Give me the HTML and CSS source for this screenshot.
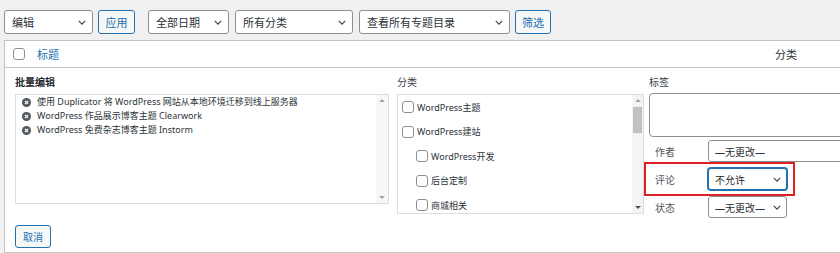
FILE: index.html
```html
<!DOCTYPE html>
<html lang="zh-CN">
<head>
    <meta charset="UTF-8">
    <meta name="viewport" content="width=device-width, initial-scale=1.0">
    <title>批量编辑</title>
    <link rel="stylesheet" href="styles.css">
</head>
<body>
    <div class="tablenav">
        <div class="select w-action">编辑
            <svg class="chev" viewBox="0 0 10 6"><path d="M1 1l4 4 4-4"/></svg>
        </div>
        <button class="btn btn-apply">应用</button>
        <div class="select w-date">全部日期
            <svg class="chev" viewBox="0 0 10 6"><path d="M1 1l4 4 4-4"/></svg>
        </div>
        <div class="select w-cat">所有分类
            <svg class="chev" viewBox="0 0 10 6"><path d="M1 1l4 4 4-4"/></svg>
        </div>
        <div class="select w-topic">查看所有专题目录
            <svg class="chev" viewBox="0 0 10 6"><path d="M1 1l4 4 4-4"/></svg>
        </div>
        <button class="btn btn-filter">筛选</button>
    </div>

    <div class="list-table">
        <div class="thead">
            <span class="cb"></span>
            <a class="col-title" href="#">标题</a>
            <span class="col-cat">分类</span>
        </div>

        <div class="bulk-edit">
            <div class="bulk-cols">
                <!-- 已选文章 -->
                <div class="col col-posts">
                    <div class="label label-strong">批量编辑</div>
                    <div class="box posts-box">
                        <ul class="post-list">
                            <li><span class="remove"><svg viewBox="0 0 10 10"><circle cx="5" cy="5" r="5"/><path d="M3.2 3.2l3.6 3.6M6.8 3.2l-3.6 3.6"/></svg></span>使用 Duplicator 将 WordPress 网站从本地环境迁移到线上服务器</li>
                            <li><span class="remove"><svg viewBox="0 0 10 10"><circle cx="5" cy="5" r="5"/><path d="M3.2 3.2l3.6 3.6M6.8 3.2l-3.6 3.6"/></svg></span>WordPress 作品展示博客主题 Clearwork</li>
                            <li><span class="remove"><svg viewBox="0 0 10 10"><circle cx="5" cy="5" r="5"/><path d="M3.2 3.2l3.6 3.6M6.8 3.2l-3.6 3.6"/></svg></span>WordPress 免费杂志博客主题 Instorm</li>
                        </ul>
                        <div class="scrollbar">
                            <span class="arrow up"></span>
                            <span class="track"></span>
                            <span class="arrow down"></span>
                        </div>
                    </div>
                </div>

                <!-- 分类 -->
                <div class="col col-cats">
                    <div class="label">分类</div>
                    <div class="box cats-box">
                        <ul class="cat-list">
                            <li><span class="cb"></span>WordPress主题</li>
                            <li><span class="cb"></span>WordPress建站</li>
                            <li class="child"><span class="cb"></span>WordPress开发</li>
                            <li class="child"><span class="cb"></span>后台定制</li>
                            <li class="child"><span class="cb"></span>商城相关</li>
                        </ul>
                        <div class="scrollbar">
                            <span class="arrow up"></span>
                            <span class="track"><span class="thumb"></span></span>
                            <span class="arrow down"></span>
                        </div>
                    </div>
                </div>

                <!-- 标签和其他字段 -->
                <div class="col col-meta">
                    <div class="label">标签</div>
                    <div class="tags-box"></div>
                    <div class="field field-author">
                        <span class="field-label">作者</span>
                        <div class="select small w-author">—无更改—</div>
                    </div>
                    <div class="field highlight">
                        <span class="field-label">评论</span>
                        <div class="select small w-short focused">不允许
                            <svg class="chev" viewBox="0 0 10 6"><path d="M1 1l4 4 4-4"/></svg>
                        </div>
                    </div>
                    <div class="field">
                        <span class="field-label">状态</span>
                        <div class="select small w-short">—无更改—
                            <svg class="chev" viewBox="0 0 10 6"><path d="M1 1l4 4 4-4"/></svg>
                        </div>
                    </div>
                </div>
            </div>

            <button class="btn btn-cancel">取消</button>
        </div>
    </div>
</body>
</html>
```

FILE: styles.css
```css
body {
    margin: 0;
    width: 840px;
    height: 253px;
    overflow: hidden;
    background: #f0f0f1;
    color: #2c3338;
    font-family: "Noto Sans", "Noto Sans CJK SC", sans-serif;
}

ul {
    list-style: none;
    margin: 0;
    padding: 0;
}

/* 顶部筛选栏 */
.tablenav {
    display: flex;
    align-items: center;
    padding: 10px 0 6px 4px;
}

.select {
    box-sizing: border-box;
    height: 24px;
    display: flex;
    align-items: center;
    justify-content: space-between;
    padding: 0 6px 0 7px;
    background: #fff;
    border: 1px solid #8c8f94;
    border-radius: 3px;
    font-size: 11px;
    color: #2c3338;
    white-space: nowrap;
}

.chev {
    width: 8px;
    height: 5px;
    flex: none;
    fill: none;
    stroke: #3c434a;
    stroke-width: 1.4;
}

.w-action { width: 89px; }
.w-date { width: 81px; margin-left: 13px; }
.w-cat { width: 118px; margin-left: 6px; }
.w-topic { width: 151px; margin-left: 6px; }

.btn {
    box-sizing: border-box;
    height: 24px;
    padding: 0;
    background: #f6f7f7;
    border: 1px solid #2271b1;
    border-radius: 3px;
    color: #2271b1;
    font-family: inherit;
    font-size: 11px;
}

.btn-apply { width: 37px; margin-left: 5px; }
.btn-filter { width: 36px; margin-left: 5px; }

/* 列表 */
.list-table {
    box-sizing: border-box;
    width: 900px;
    margin-left: 4px;
    background: #fff;
    border: 1px solid #c3c4c7;
}

.cb {
    box-sizing: border-box;
    display: inline-block;
    flex: none;
    width: 12px;
    height: 12px;
    border: 1px solid #8c8f94;
    border-radius: 3px;
    background: #fff;
}

.thead {
    display: flex;
    align-items: center;
    height: 26px;
    padding-left: 8px;
    border-bottom: 1px solid #c3c4c7;
    font-size: 11px;
}

.col-title {
    width: 738px;
    margin-left: 12px;
    color: #2271b1;
    text-decoration: none;
}

.col-cat {
    color: #2c3338;
}

/* 批量编辑 */
.bulk-edit {
    padding: 5px 10px 4px 10px;
}

.bulk-cols {
    display: flex;
    align-items: flex-start;
}

.label {
    height: 18px;
    line-height: 18px;
    margin-bottom: 3px;
    font-size: 10px;
    color: #3c434a;
}

.label-strong {
    color: #1d2327;
    text-shadow: 0 0 0.3px #1d2327;
}

.col-posts { width: 374px; }
.col-cats { width: 247px; margin-left: 8px; }
.col-meta { width: 200px; margin-left: 5px; }

.box {
    box-sizing: border-box;
    display: flex;
    background: #fff;
    border: 1px solid #dcdcde;
}

.posts-box { height: 110px; }
.cats-box { height: 120px; }

.post-list {
    flex: 1;
    padding: 0 0 0 6px;
    font-size: 9px;
    line-height: 14px;
}

.post-list li {
    display: flex;
    align-items: center;
    white-space: nowrap;
}

.remove {
    display: inline-flex;
    margin-right: 6px;
}

.remove svg {
    width: 9px;
    height: 9px;
}

.remove circle { fill: #50575e; }
.remove path { stroke: #fff; stroke-width: 1.4; }

.cat-list {
    flex: 1;
    padding-left: 4px;
    font-size: 9px;
    overflow: hidden;
}

.cat-list li {
    display: flex;
    align-items: center;
    height: 24.5px;
    white-space: nowrap;
}

.cat-list .cb {
    margin-right: 3px;
}

.cat-list .child {
    padding-left: 14px;
}

/* 假滚动条 */
.scrollbar {
    width: 11px;
    display: flex;
    flex-direction: column;
    background: #f4f4f4;
}

.posts-box .scrollbar { width: 12px; background: #f7f7f7; }

.arrow {
    height: 12px;
    position: relative;
}

.arrow::after {
    content: "";
    position: absolute;
    left: 3px;
    top: 4px;
    border-left: 3px solid transparent;
    border-right: 3px solid transparent;
}

.arrow.up::after { border-bottom: 3px solid #a3a3a3; }
.arrow.down::after { border-top: 3px solid #505050; top: 5px; }
.posts-box .arrow.down::after { border-top-color: #a3a3a3; }

.track {
    flex: 1;
}

.thumb {
    display: block;
    height: 26px;
    margin: 0 1px;
    background: #c1c1c1;
}

/* 右侧字段 */
.tags-box {
    box-sizing: border-box;
    height: 44px;
    margin-top: -1px;
    border: 1px solid #8c8f94;
    border-radius: 4px;
    background: #fff;
}

.field {
    position: relative;
    display: flex;
    align-items: center;
    padding-left: 6px;
    margin-top: 6px;
}

.field-author {
    margin-top: 3px;
}

.field-label {
    flex: none;
    width: 53px;
    font-size: 10px;
    color: #50575e;
}

.select.small {
    flex: none;
    height: 22px;
    font-size: 10px;
    padding: 0 5px 0 6px;
}

.w-author { width: 150px; }
.w-short { width: 79px; }

.select.focused {
    border-color: #2271b1;
    box-shadow: 0 0 0 1px #2271b1;
    color: #1d2327;
}

/* 红框标注 */
.highlight::after {
    content: "";
    position: absolute;
    left: -5px;
    top: -6px;
    width: 151px;
    height: 34px;
    box-sizing: border-box;
    border: 2px solid #de1f26;
    pointer-events: none;
}

.btn-cancel {
    width: 36px;
    height: 23px;
    margin-top: 7px;
    font-size: 10px;
}
```
